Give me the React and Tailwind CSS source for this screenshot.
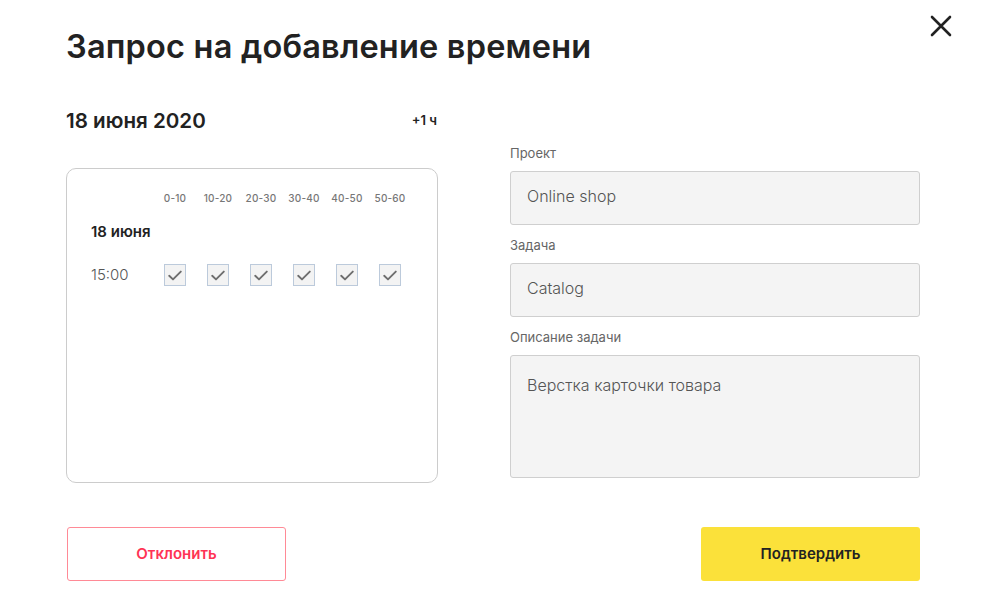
const slots = ["0-10", "10-20", "20-30", "30-40", "40-50", "50-60"];

function CheckBox() {
  return (
    <div className="w-[22px] h-[22px] border border-[#bccadb] bg-[#f3f3f3] flex items-center justify-center">
      <svg width="14" height="11" viewBox="0 0 14 11" fill="none">
        <path d="M1.2 5.8L5 9.4L12.8 1.6" stroke="#6e6e6e" strokeWidth="1.9" strokeLinecap="round" strokeLinejoin="round" />
      </svg>
    </div>
  );
}

function Field({ label, value, tall }) {
  return (
    <div className="flex flex-col">
      <div className="text-[13px] leading-[18px] text-[#666] mb-[9px]">{label}</div>
      <div
        className={
          "w-full border border-[#cfcfcf] rounded-[3px] bg-[#f4f4f4] px-[16px] text-[16px] font-light text-[#555] " +
          (tall ? "h-[123px] pt-[17px]" : "h-[54px] flex items-center pb-[5px]")
        }
      >
        {value}
      </div>
    </div>
  );
}

export default function App() {
  return (
    <div className="relative w-full h-[601px] bg-white text-[#222]" style={{ fontFamily: "Inter, 'Noto Sans', sans-serif" }}>
      <button className="absolute left-[930px] top-[15px] text-[#222]">
        <svg width="22" height="22" viewBox="0 0 22 22" fill="none">
          <path d="M2 2L20 20M20 2L2 20" stroke="#222" strokeWidth="2.6" strokeLinecap="round" />
        </svg>
      </button>

      <div className="pl-[66px] pr-[82px] pt-[28px]">
        <h1 className="text-[32.5px] leading-[38px] font-semibold tracking-[0.2px]">Запрос на добавление времени</h1>

        <div className="mt-[41px] flex justify-between">
          <div className="w-[372px] flex flex-col">
            <div className="flex items-center justify-between h-[28px]">
              <div className="text-[20.6px] font-semibold">18 июня 2020</div>
              <div className="text-[13px] font-semibold pr-[1px]">+1 ч</div>
            </div>

            <div className="mt-[33px] h-[315px] border border-[#cccccc] rounded-[10px] pl-[24px] pt-[21px]">
              <div className="flex ml-[73px] gap-[21px] h-[16px] items-center">
                {slots.map((s) => (
                  <div key={s} className="w-[22px] flex justify-center whitespace-nowrap text-[10px] font-medium text-[#777] tracking-[0.2px]">
                    {s}
                  </div>
                ))}
              </div>
              <div className="mt-[16px] text-[15px] leading-[20px] font-semibold">18 июня</div>
              <div className="mt-[22px] flex items-center">
                <div className="w-[73px] text-[15px] font-light text-[#555]">15:00</div>
                <div className="flex gap-[21px]">
                  {slots.map((s) => (
                    <CheckBox key={s} />
                  ))}
                </div>
              </div>
            </div>
          </div>

          <div className="w-[410px] pt-[37px] flex flex-col gap-[11px]">
            <Field label="Проект" value="Online shop" />
            <Field label="Задача" value="Catalog" />
            <Field label="Описание задачи" value="Верстка карточки товара" tall />
          </div>
        </div>

        <div className="mt-[44px] flex justify-between">
          <button className="ml-[1px] w-[219px] h-[54px] border border-[#ff8a96] rounded-[3px] text-[#ff3355] text-[15px] font-semibold">
            Отклонить
          </button>
          <button className="w-[219px] h-[54px] rounded-[3px] bg-[#fbe13a] text-[#222] text-[15px] font-semibold">
            Подтвердить
          </button>
        </div>
      </div>
    </div>
  );
}
